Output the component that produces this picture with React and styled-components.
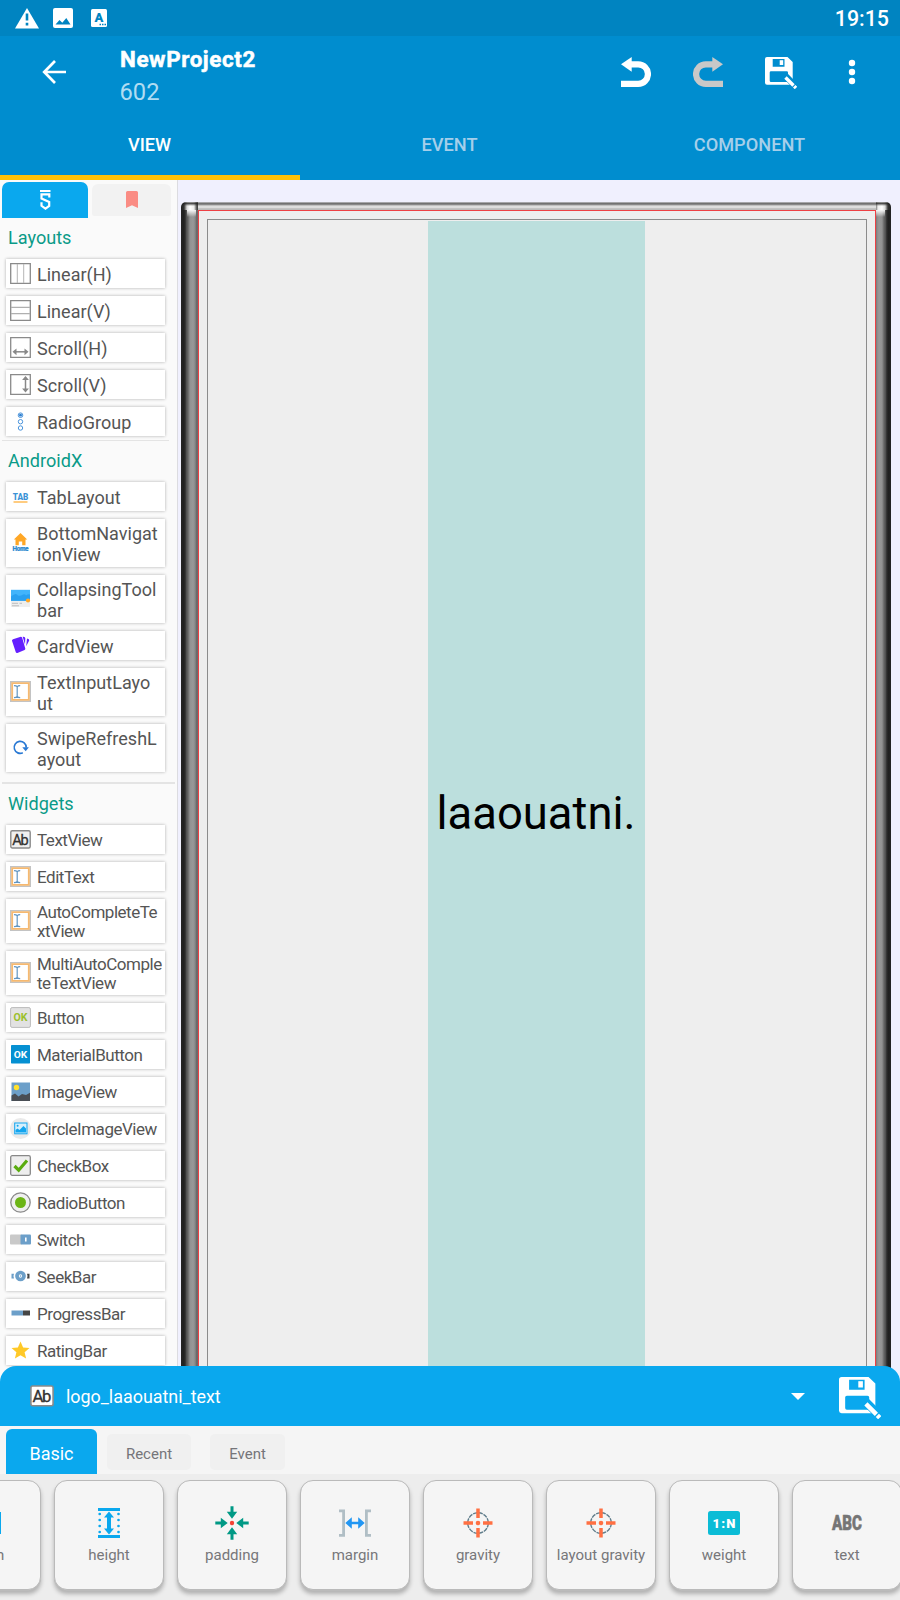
import React from "react";
import styled, { createGlobalStyle, css } from "styled-components";

const GlobalStyle = createGlobalStyle`
  * { box-sizing: border-box; }
  body { margin: 0; font-family: Roboto, "Liberation Sans", sans-serif; }
  svg { display: block; flex: none; }
  svg text { font-family: Roboto, "Liberation Sans", sans-serif; }
`;

const Screen = styled.div`
  display: flex;
  flex-direction: column;
  width: 900px;
  height: 1600px;
  overflow: hidden;
  background: #f0f0fe;
`;

/* ---------- header ---------- */

const StatusBar = styled.div`
  display: flex;
  align-items: center;
  justify-content: space-between;
  height: 36px;
  flex: none;
  padding: 0 11px 0 15px;
  background: #0084c1;
  color: #fff;
`;

const StatusIcons = styled.div`
  display: flex;
  align-items: center;
  gap: 14px;
`;

const Clock = styled.span`
  font-size: 21.4px;
  font-weight: 500;
  line-height: 36px;
  padding-top: 2px;
`;

const Header = styled.header`
  flex: none;
  height: 144px;
  background: #008dcf;
  color: #fff;
`;

const Toolbar = styled.div`
  display: flex;
  height: 72px;
  padding-left: 42px;
`;

const BackButton = styled.div`
  width: 78px;
  padding-top: 23px;
`;

const TitleBlock = styled.div`
  flex: 1;
  padding-top: 9px;
`;

const Title = styled.div`
  font-size: 22.4px;
  font-weight: 700;
  line-height: 28px;
  letter-spacing: 0.6px;
  -webkit-text-stroke: 0.5px #fff;
`;

const Subtitle = styled.div`
  margin: 2px 0 0 -0.5px;
  font-size: 23.7px;
  line-height: 34px;
  color: #b0dcf2;
`;

const Actions = styled.div`
  display: flex;
  align-items: flex-start;
  padding: 21px 44px 0 0;
  gap: 42px;
`;

const MoreSlot = styled.div`
  padding: 2px 0 0 9px;
`;

const Tabs = styled.nav`
  display: grid;
  grid-template-columns: repeat(3, 1fr);
  height: 72px;
`;

const Tab = styled.div`
  display: flex;
  align-items: center;
  justify-content: center;
  padding: 0 1px 0 0;
  font-size: 18.2px;
  font-weight: 500;
  color: ${(p) => (p.$active ? "#fff" : "#a6cfea")};
  box-shadow: ${(p) => (p.$active ? "inset 0 -5px #ffc107" : "none")};
`;

/* ---------- palette ---------- */

const Workspace = styled.main`
  display: flex;
  flex: none;
  height: 1206px;
  overflow: hidden;
`;

const Palette = styled.aside`
  width: 178px;
  flex: none;
  background: #fafafa;
  border-right: 1px solid #dcdce0;
`;

const PaletteTabs = styled.div`
  display: flex;
  height: 38px;
  padding: 2px 0 0 2px;
  gap: 4px;
`;

const PaletteTab = styled.div`
  display: flex;
  justify-content: center;
  ${(p) =>
    p.$active
      ? css`
          width: 86px;
          height: 36px;
          padding-top: 7px;
          background: #0aa8ee;
          border-radius: 7px 7px 0 0;
        `
      : css`
          width: 79px;
          height: 32px;
          margin-top: 2px;
          padding-top: 7px;
          background: #f2f2f2;
          border-radius: 6px 6px 2px 2px;
        `}
`;

const Section = styled.section`
  border-top: ${(p) => p.$line || 0}px solid #e4e4e4;
  margin-top: ${(p) => p.$gap || 0}px;
  margin-left: 2px;
  width: ${(p) => p.$width || 167}px;
`;

const SectionTitle = styled.h2`
  margin: 0;
  height: 41px;
  padding: 9px 0 0 6px;
  font-size: 18.1px;
  font-weight: 400;
  line-height: 22px;
  color: #0a9a88;
`;

const List = styled.div`
  display: flex;
  flex-direction: column;
  gap: 8px;
  padding-left: 4px;
`;

const Item = styled.div`
  display: flex;
  align-items: center;
  width: 159px;
  height: ${(p) => p.$h}px;
  padding-left: 4px;
  gap: 6px;
  background: #fff;
  box-shadow: 0 0 3px rgba(0, 0, 0, 0.3);

  svg { margin-bottom: ${(p) => (p.$h > 29 ? 2 : 0)}px; }
`;

const ItemLabel = styled.span`
  padding-top: ${(p) => (p.$compact ? 2 : 1)}px;
  font-size: ${(p) => (p.$compact ? 17 : 18)}px;
  line-height: ${(p) => (p.$compact ? 19 : 21)}px;
  letter-spacing: ${(p) => (p.$compact ? -0.47 : 0.02)}px;
  color: #555;
  white-space: pre;
`;

/* ---------- canvas ---------- */

const Canvas = styled.div`
  flex: 1;
  padding: 22px 9px 0 3px;
`;

const Phone = styled.div`
  display: grid;
  grid-template-columns: 17px 1fr 15px;
  grid-template-rows: 8px 1200px;
`;

const TopEdge = styled.div`
  background: linear-gradient(
    #d5d5dc 0,
    #777 1px,
    #6c6c6c 2px,
    #c0c0c0 3.5px,
    #dedede 4.5px,
    #dcdcdc 6px,
    #aaa 7px,
    #ccc 8px
  );
`;

const Corner = styled.div`
  background: linear-gradient(
      #7779 0,
      #222c 1.5px,
      #fff0 4px
    ),
    linear-gradient(
      ${(p) => (p.$right ? "to left" : "to right")},
      #222 0,
      #333 3px,
      #ddd 6px,
      #fff 9px,
      #eee 13px,
      #444 16px
    );
  border-radius: ${(p) => (p.$right ? "0 5px 0 0" : "5px 0 0 0")};
`;

const SideEdge = styled.div`
  background: linear-gradient(#fffe 0, #fff0 7px)
      ${(p) => (p.$right ? "0" : "6px")} 0 / 9px 7px no-repeat,
    linear-gradient(
      ${(p) => (p.$right ? "to left" : "to right")},
      #242424 0,
      #202020 3px,
      #363636 4.5px,
      #4a4a4a 5px,
      #666 7px,
      #929292 9px,
      #999 12px,
      #8a8a8a 14px,
      #606060 16px,
      #777 17px
    );
`;

const PhoneScreen = styled.div`
  padding: 8px 8px 0;
  background: #eee;
  border: 1.5px solid #ee4044;
  border-bottom: 0;
`;

const Root = styled.div`
  display: flex;
  justify-content: center;
  height: 1190px;
  border: 1px solid #8c8c8c;
  padding: 1px 2px 0 0;
`;

const SelectedView = styled.div`
  display: flex;
  align-items: center;
  justify-content: center;
  width: 217px;
  height: 1185px;
  background: #bcdfdd;
  color: #000;
  font-size: 45.4px;
  line-height: 53px;
`;

/* ---------- property sheet ---------- */

const Sheet = styled.section`
  position: relative;
  flex: none;
  height: 234px;
  margin-top: -20px;
`;

const SheetHeader = styled.div`
  display: flex;
  align-items: center;
  height: 60px;
  padding: 0 19px 0 30px;
  background: #0aa8ee;
  border-radius: 16px 16px 0 0;
  color: #fff;

  svg:last-child { margin-top: 4px; }
`;

const SheetName = styled.span`
  flex: 1;
  padding: 1px 0 0 12px;
  font-size: 17.9px;
`;

const Caret = styled.div`
  width: 0;
  border: 7.5px solid transparent;
  border-top-color: #fff;
  border-bottom-width: 0;
  margin-right: 34px;
`;

const SheetTabs = styled.div`
  display: flex;
  height: 48px;
  padding-left: 6px;
  background: #f5f5f5;
`;

const SheetTab = styled.div`
  display: flex;
  align-items: center;
  justify-content: center;
  ${(p) =>
    p.$active
      ? css`
          width: 91px;
          height: 45px;
          margin: 3px 10px 0 0;
          padding-top: 3px;
          font-size: 18px;
          color: #fff;
          background: #0aa8ee;
          border-radius: 6px 6px 0 0;
        `
      : css`
          width: ${p.$w}px;
          height: 36px;
          margin: 8px 19px 0 0;
          padding-top: 4px;
          font-size: 15px;
          color: #75757a;
          background: #f0f0f0;
          border-radius: 5px;
        `}
`;

const Properties = styled.div`
  display: flex;
  gap: 13px;
  height: 126px;
  padding: 6px 0 0;
  overflow: hidden;
  background: #ededed;
`;

const PropertyCard = styled.div`
  display: flex;
  flex: none;
  flex-direction: column;
  align-items: center;
  width: 110px;
  height: 110px;
  border: 1.6px solid #bababa;
  border-radius: 13px;
  background: #f5f5f5;
  box-shadow: 0 1px 0 #bbb, 0 4px 4px rgba(0, 0, 0, 0.26);
  &:first-child { margin-left: -69px; }
`;

const PropertyIcon = styled.div`
  display: flex;
  align-items: center;
  height: 36px;
  margin-top: 24px;
`;

const PropertyLabel = styled.span`
  margin-top: 4px;
  font-size: 15px;
  line-height: 20px;
  white-space: nowrap;
  color: #77777a;
`;

/* ---------- drawings ---------- */

const SaveIcon = ({ size, bg }) => (
  <svg width={size} height={size} viewBox="0 0 32 32">
    <path fill="#fff" fillRule="evenodd" d="M2 0H22.500L27.700 5V26a1.800 1.800 0 0 1-1.800 1.700H2A2 2 0 0 1 0 25.800V2A2 2 0 0 1 2 0ZM7.700 2V9.700H19.500V2ZM6 14.200a1.300 1.300 0 0 0-1.300 1.300V23.700a1.300 1.300 0 0 0 1.300 1.300H23V15.500a1.300 1.300 0 0 0-1.300-1.300Z" />
    <path fill="#fff" d="M14.700 3.200h3.500v4.800h-3.500z" />
    <path stroke={bg} strokeWidth="6.500" d="M20.500 19 32 30.500" />
    <path stroke="#fff" strokeWidth="3.400" d="M20.500 20.500 28.500 28.500M29.200 29.200 31 31" />
  </svg>
);

const UndoIcon = ({ redo }) => (
  <svg width="30" height="30" viewBox="0 0 30 30">
    <g transform={redo ? "matrix(-1 0 0 1 30 0)" : undefined} fill={redo ? "#c8c8c8" : "#fff"}>
      <path d="M0 7.300 10.700 0V14.700Z" />
      <path fill="none" stroke={redo ? "#c8c8c8" : "#fff"} strokeWidth="6.200" d="M10 7.300H17.200a9.700 9.700 0 0 1 0 19.500H0" />
    </g>
  </svg>
);

const Glyph = ({ children, w = 21, h = 21 }) => (
  <svg width={w} height={h} viewBox="0 0 21 21" fill="none">{children}</svg>
);

const AbIcon = ({ size = 21, boxed }) => (
  <Glyph w={size} h={size}>
    <rect x=".8" y="1.800" width="19.400" height="17.200" rx="1.500" fill={boxed ? "#fff" : "#f0f0f0"} stroke="#8a8a8a" strokeWidth="1.400" />
    <text x="10.500" y="15.600" textAnchor="middle" fontSize="14.500" fill="#333" stroke="#333" strokeWidth=".3" textLength="16.500">Ab</text>
  </Glyph>
);

const InputIcon = () => (
  <Glyph>
    <path stroke="#c3c3c3" strokeWidth="1.600" d="M.8.8h19.400v19.400H.8z" />
    <path stroke="#f6b970" strokeWidth="1.800" d="M2.200 2.200h16.600v16.600H2.200z" />
    <path stroke="#6296c2" strokeWidth="1.200" d="M4 4.600q2.500 0 3.200 1.200q.7-1.200 3-1.200M7.200 5.500V15.500M4 16.600q2.500 0 3.200-1.200q.7 1.200 3 1.200" />
  </Glyph>
);

const OkText = (p) => (
  <text x="10.500" textAnchor="middle" fontWeight="700" {...p}>OK</text>
);

const icons = {
  linearH: <Glyph><path stroke="#8a8a8a" strokeWidth="1.300" d="M.7.7h19.600v19.600H.7z" /><path stroke="#b5b5b5" strokeWidth="1" d="M7.300 1V20M13.700 1V20" /></Glyph>,
  linearV: <Glyph><path stroke="#8a8a8a" strokeWidth="1.300" d="M.7.7h19.600v19.600H.7z" /><path stroke="#b0b0b0" strokeWidth="1.200" d="M1 7.300H20M1 13.700H20" /></Glyph>,
  scrollH: <Glyph><path stroke="#8a8a8a" strokeWidth="1.300" d="M.7.7h19.600v19.600H.7z" /><path stroke="#888" strokeWidth="1.500" d="M4 14.800H17" /><path fill="#888" d="m2.500 14.800 4-3.400v6.800zM18.500 14.800l-4-3.400v6.800z" /></Glyph>,
  scrollV: <Glyph><path stroke="#8a8a8a" strokeWidth="1.300" d="M.7.7h19.600v19.600H.7z" /><path stroke="#888" strokeWidth="1.500" d="M15.500 4V16" /><path fill="#888" d="m15.500 2 3.400 4h-6.800zM15.500 18.500l3.400-4h-6.800z" /></Glyph>,
  radioGroup: <Glyph><g stroke="#4a94dc" strokeWidth="1"><circle cx="10.500" cy="4.200" r="2.300" /><circle cx="10.500" cy="10.700" r="2.200" /><circle cx="10.500" cy="17" r="2.200" /></g><circle cx="10.500" cy="4.200" r="1.400" fill="#2d7fd0" /></Glyph>,
  tab: <Glyph><text x="10.500" y="13.800" textAnchor="middle" fontSize="9.600" fontWeight="900" fill="#3b93d6" textLength="15.500" lengthAdjust="spacingAndGlyphs">TAB</text><path fill="#ffcc80" d="M3.500 15h14v2h-14z" /></Glyph>,
  home: <Glyph><path fill="#ffa726" d="M10.500 1 17.200 7.500H15.500V13.200H12.200V9.500H8.800V13.200H5.500V7.500H3.800z" /><text x="10.600" y="18.900" textAnchor="middle" fontSize="6.400" fontWeight="900" fill="#2d8ad0" stroke="#2d8ad0" strokeWidth=".2" textLength="16">Home</text></Glyph>,
  collapsing: <Glyph><path fill="#eee" d="M1 12.500h19v6.500H1z" /><path fill="#42b4fb" d="M1 1.800h19v11H1z" /><path fill="#2aa0f0" d="M1 8.500q5-4.500 7-1 2 1 5-1 2-1 3 1 2-2 4-1v6.300H1z" /><path stroke="#bdbdbd" d="M2 15.300h6M2 17.800h7M9.500 15.300h2.500" /><circle cx="18" cy="12.500" r="2.100" fill="#ffa726" /></Glyph>,
  card: <Glyph><path transform="translate(0 1)" fill="#651fff" d="m3 3.200 7.800-2.400q1 0 1.300.8l3.200 11q.2 1-.7 1.300l-7.200 3q-1.200.3-1.600-.7L2 4.700q-.2-1 1-1.500ZM12.700.8q2.600-.3 2.600 1.500L15 8.500ZM17 2.500q2.600.7 2.200 2l-3 5.800Z" /></Glyph>,
  input: <InputIcon />,
  refresh: <Glyph><path stroke="#2979d4" strokeWidth="1.700" d="M12.800 15.800A6 6 0 1 1 16.200 10.500" /><path fill="#2979d4" d="M12.300 10.200h6.600l-3.200 4z" /></Glyph>,
  ab: <AbIcon />,
  ok: <Glyph><rect x=".6" y=".6" width="19.800" height="19.800" rx="1.500" fill="#e2e2e2" stroke="#bbb" /><OkText y="14.200" fontSize="10.400" textLength="14" lengthAdjust="spacingAndGlyphs" fill="#9abf2c" /></Glyph>,
  materialOk: <Glyph><rect x="1" y="1" width="19" height="18.500" rx=".7" fill="#0590d2" /><OkText y="13.500" fontSize="8.500" textLength="13.500" lengthAdjust="spacingAndGlyphs" fill="#fff" /></Glyph>,
  image: <Glyph><path fill="#6c9fc9" d="M1.500 1.500h18.500v18.500H1.500z" /><circle cx="6.500" cy="6.500" r="2.700" fill="#ffe12e" /><path fill="#494e55" d="M1.500 14.500 5 12.500l3.500 3 3.500-2.500 4 1 4-2.200V20H1.500z" /></Glyph>,
  circleImage: <Glyph><circle cx="10.500" cy="10.500" r="10.500" fill="#eaeaea" /><rect x="4.700" y="5" width="12.300" height="10.800" fill="#d5effc" stroke="#12a5ef" /><circle cx="7.600" cy="7.800" r="1" fill="#12a5ef" /><path fill="#12a5ef" d="M5.500 14.500V12l2-1.500 2 1.500 4-4 2.500 2.500v4z" /></Glyph>,
  check: <Glyph><rect x=".7" y=".7" width="19.600" height="19.600" rx="1.500" fill="#eeeeee" stroke="#888" strokeWidth="1.300" /><path stroke="#5aac0f" strokeWidth="3.200" d="m4.500 11 4.200 4.200L17 5.500" /></Glyph>,
  radio: <Glyph><circle cx="10.500" cy="10.500" r="9.700" fill="#f0f0f0" stroke="#8a8a8a" strokeWidth="1.300" /><circle cx="10.500" cy="10.500" r="5.500" fill="#6cb516" /></Glyph>,
  toggle: <Glyph><rect y="5.500" width="12" height="10" rx="1" fill="#c9c9c9" /><rect x="10.500" y="5.500" width="10.500" height="10" rx="1" fill="#6c9fc9" /><path fill="#fff" d="M15 8.500h1.600v4H15z" /></Glyph>,
  seek: <Glyph><circle cx="10.500" cy="10" r="3.500" stroke="#6c9fc9" strokeWidth="3.700" /><circle cx="10.500" cy="10" r=".8" fill="#6c9fc9" /><path fill="#6c9fc9" d="M1.500 7.700H4q-1 2 0 4.800H1.500z" /><path fill="#444" d="M19.500 7.700H17q1 2 0 4.800h2.500z" /></Glyph>,
  progress: <Glyph><path fill="#6c9fc9" d="M1.500 7.500h11.500v5H1.500z" /><path fill="#454545" d="M13 7.500h7v5h-7z" /></Glyph>,
  star: <Glyph><path fill="#ffc928" d="m10.500 1.500 2.600 6 6.400.6-4.900 4.200 1.500 6.300-5.600-3.300-5.600 3.300 1.500-6.300L1.500 8.100l6.400-.6z" /></Glyph>,
};

const HeightIcon = ({ rotate }) => (
  <svg width="32" height="32" viewBox="0 0 32 32" fill="none">
    <g transform={rotate ? "rotate(90 16 16)" : undefined}>
      <path fill="#0aa8ee" d="M5 1h22v3H5zM5 28h22v3H5zM16 4.500l5 6h-3v11h3l-5 6-5-6h3v-11h-3z" />
      <path stroke="#0aa8ee" strokeWidth="2.700" strokeLinecap="round" strokeDasharray="0 6" d="M6.700 7v19M25.500 7v19" />
    </g>
  </svg>
);

const PaddingIcon = () => (
  <svg width="34" height="34" viewBox="0 0 34 34">
    {[0, 90, 180, 270].map((a) => (
      <path key={a} fill="#009985" transform={`rotate(${a} 17 17)`} d="M15.500.3h3v5.500h3.700L17 12.700l-5.200-6.900h3.700z" />
    ))}
    <circle cx="17" cy="17" r="2.200" fill="#f44336" />
  </svg>
);

const MarginIcon = () => (
  <svg width="32" height="28" viewBox="0 0 32 28" fill="none">
    <path stroke="#b0bec5" strokeWidth="2.800" d="M0 1.800h4.600v24.500H0M32 1.800h-4.600v24.500H32" />
    <path fill="#2196f3" d="m6.300 14 6.500-5.700v4.400h6.400V8.300l6.500 5.700-6.500 5.700v-4.400h-6.400v4.400z" />
  </svg>
);

const GravityIcon = () => (
  <svg width="30" height="30" viewBox="0 0 30 30" fill="none">
    <circle cx="15" cy="15" r="10.300" stroke="#607d8b" strokeWidth="1.400" strokeDasharray="4.500 .9" />
    <path stroke="#ff7043" strokeWidth="3.500" d="M15 .5v9.500M15 20v9.500M.5 15H10M20 15h9.500" />
    <circle cx="15" cy="15" r="2.300" fill="#ff7043" />
  </svg>
);

const WeightIcon = () => (
  <svg width="32" height="24" viewBox="0 0 32 24">
    <rect width="32" height="24" rx="2.500" fill="#0bbcd6" />
    <text x="16" y="16.900" textAnchor="middle" fontSize="13" fontWeight="900" fill="#fff" textLength="23">1:N</text>
  </svg>
);

const TextIcon = () => (
  <svg width="32" height="24" viewBox="0 0 32 24">
    <text x="16" y="19.300" textAnchor="middle" fontSize="19.500" fontWeight="900" fill="#757575" stroke="#757575" strokeWidth=".5" textLength="30" lengthAdjust="spacingAndGlyphs">ABC</text>
  </svg>
);

const layouts = [
  ["linearH", "Linear(H)"],
  ["linearV", "Linear(V)"],
  ["scrollH", "Scroll(H)"],
  ["scrollV", "Scroll(V)"],
  ["radioGroup", "RadioGroup"],
];

const androidx = [
  ["tab", "TabLayout"],
  ["home", "BottomNavigat\nionView"],
  ["collapsing", "CollapsingTool\nbar"],
  ["card", "CardView"],
  ["input", "TextInputLayo\nut"],
  ["refresh", "SwipeRefreshL\nayout"],
];

const widgets = [
  ["ab", "TextView"],
  ["input", "EditText"],
  ["input", "AutoCompleteTe\nxtView"],
  ["input", "MultiAutoComple\nteTextView"],
  ["ok", "Button"],
  ["materialOk", "MaterialButton"],
  ["image", "ImageView"],
  ["circleImage", "CircleImageView"],
  ["check", "CheckBox"],
  ["radio", "RadioButton"],
  ["toggle", "Switch"],
  ["seek", "SeekBar"],
  ["progress", "ProgressBar"],
  ["star", "RatingBar"],
];

const properties = [
  [<HeightIcon rotate />, "width"],
  [<HeightIcon />, "height"],
  [<PaddingIcon />, "padding"],
  [<MarginIcon />, "margin"],
  [<GravityIcon />, "gravity"],
  [<GravityIcon />, "layout gravity"],
  [<WeightIcon />, "weight"],
  [<TextIcon />, "text"],
];

const Items = ({ items, compact }) => (
  <List>
    {items.map(([icon, label]) => (
      <Item key={label} $h={label.includes("\n") ? (compact ? 44 : 48) : 29}>
        {icons[icon]}
        <ItemLabel $compact={compact}>{label}</ItemLabel>
      </Item>
    ))}
  </List>
);

export default function App() {
  return (
    <Screen>
      <GlobalStyle />
      <StatusBar>
        <StatusIcons>
          <svg width="24" height="21" viewBox="0 0 24 21">
            <path fill="#fff" d="M12 0 24 20.500H0z" />
            <path stroke="#0084c1" strokeWidth="2.600" d="M12 5.500v7M12 14.800v2.700" />
          </svg>
          <svg width="20" height="20" viewBox="0 0 20 20">
            <rect width="20" height="20" rx="2" fill="#fff" />
            <path fill="#0084c1" d="m2.500 16.500 4-4.500 2.800 2.700 4-4.700 4.200 6.500z" />
          </svg>
          <svg width="24" height="20" viewBox="0 0 24 20">
            <rect x="4" y="1" width="16" height="18" rx="1.500" fill="#fff" />
            <text x="12" y="13.800" textAnchor="middle" fontSize="13" fontWeight="900" fill="#0084c1">A</text>
            <path stroke="#0084c1" strokeWidth="1.300" strokeDasharray="1.500 1" d="M12.500 16.500h6.500" />
          </svg>
        </StatusIcons>
        <Clock>19:15</Clock>
      </StatusBar>

      <Header>
        <Toolbar>
          <BackButton>
            <svg width="25" height="26" viewBox="0 0 25 26" fill="none" stroke="#fff" strokeWidth="2.700">
              <path d="M24 13H3M13 2 2.200 13 13 24" />
            </svg>
          </BackButton>
          <TitleBlock>
            <Title>NewProject2</Title>
            <Subtitle>602</Subtitle>
          </TitleBlock>
          <Actions>
            <UndoIcon />
            <UndoIcon redo />
            <SaveIcon size={32} bg="#008dcf" />
            <MoreSlot>
              <svg width="8" height="26" viewBox="0 0 8 26" fill="#fff">
                <circle cx="4" cy="4" r="3.200" />
                <circle cx="4" cy="13" r="3.200" />
                <circle cx="4" cy="22" r="3.200" />
              </svg>
            </MoreSlot>
          </Actions>
        </Toolbar>
        <Tabs>
          <Tab $active>VIEW</Tab>
          <Tab>EVENT</Tab>
          <Tab>COMPONENT</Tab>
        </Tabs>
      </Header>

      <Workspace>
        <Palette>
          <PaletteTabs>
            <PaletteTab $active>
              <svg width="13" height="22" viewBox="0 0 13 22" fill="none" stroke="#fff" strokeWidth="2.200">
                <path d="M1 2H11.500M10.300 8.500V5.300H2.500V9.500L10.200 13V17L6.500 19.700 2.500 16.800V13.300" />
              </svg>
            </PaletteTab>
            <PaletteTab>
              <svg width="12" height="17" viewBox="0 0 12 17" fill="#fa8c84">
                <path d="M1.500 0h9A1.500 1.500 0 0 1 12 1.500V17L6 14.300 0 17V1.500A1.500 1.500 0 0 1 1.500 0z" />
              </svg>
            </PaletteTab>
          </PaletteTabs>
          <Section>
            <SectionTitle>Layouts</SectionTitle>
            <Items items={layouts} />
          </Section>
          <Section $gap={4} $line={1}>
            <SectionTitle>AndroidX</SectionTitle>
            <Items items={androidx} />
          </Section>
          <Section $gap={10} $line={2} $width={173}>
            <SectionTitle>Widgets</SectionTitle>
            <Items items={widgets} compact />
          </Section>
        </Palette>

        <Canvas>
          <Phone>
            <Corner />
            <TopEdge />
            <Corner $right />
            <SideEdge />
            <PhoneScreen>
              <Root>
                <SelectedView>laaouatni.</SelectedView>
              </Root>
            </PhoneScreen>
            <SideEdge $right />
          </Phone>
        </Canvas>
      </Workspace>

      <Sheet>
        <SheetHeader>
          <AbIcon size={24} boxed />
          <SheetName>logo_laaouatni_text</SheetName>
          <Caret />
          <SaveIcon size={42} bg="#0aa8ee" />
        </SheetHeader>
        <SheetTabs>
          <SheetTab $active>Basic</SheetTab>
          <SheetTab $w={84}>Recent</SheetTab>
          <SheetTab $w={75}>Event</SheetTab>
        </SheetTabs>
        <Properties>
          {properties.map(([icon, label]) => (
            <PropertyCard key={label}>
              <PropertyIcon>{icon}</PropertyIcon>
              <PropertyLabel>{label}</PropertyLabel>
            </PropertyCard>
          ))}
        </Properties>
      </Sheet>
    </Screen>
  );
}
